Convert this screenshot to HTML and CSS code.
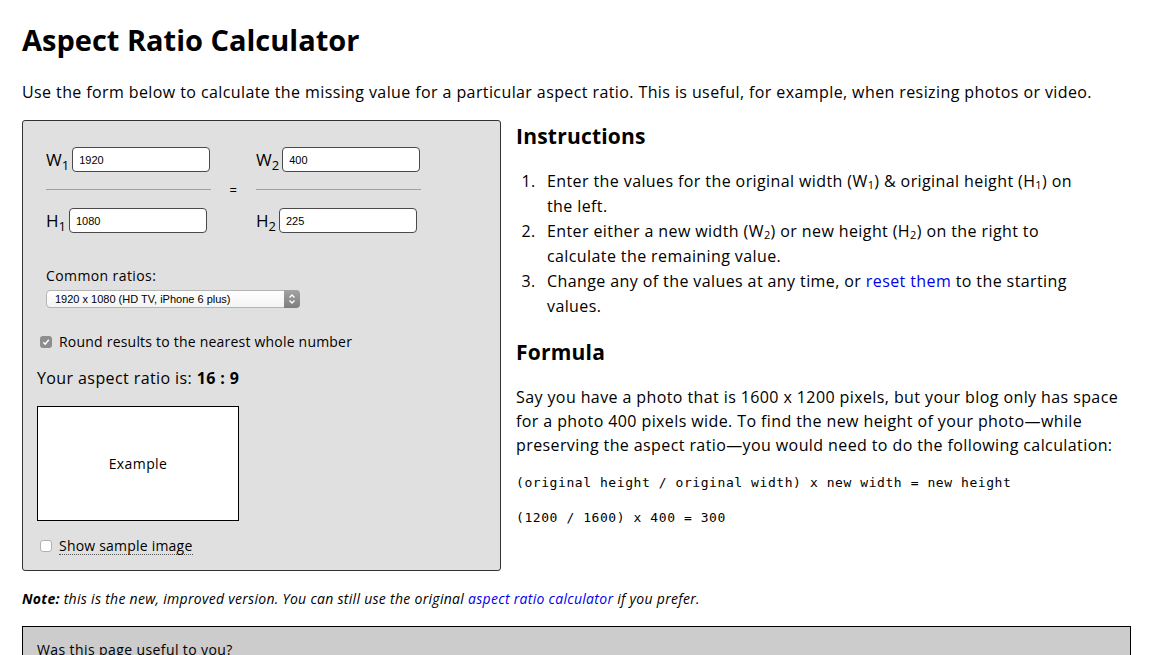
FILE: index.html
```html
<!DOCTYPE html>
<html lang="en">
<head>
<meta charset="utf-8">
<title>Aspect Ratio Calculator</title>
<link rel="stylesheet" href="styles.css">
</head>
<body>
<h1 class="title">Aspect Ratio Calculator</h1>
<p class="intro">Use the form below to calculate the missing value for a particular aspect ratio. This is useful, for example, when resizing photos or video.</p>

<div class="main">
  <div class="panel">
    <div class="ratio">
      <div class="frac">
        <div class="field"><label class="var">W<sub>1</sub></label><input class="num" type="text" value="1920"></div>
        <div class="bar"></div>
        <div class="field"><label class="var">H<sub>1</sub></label><input class="num" type="text" value="1080"></div>
      </div>
      <div class="eq">=</div>
      <div class="frac">
        <div class="field"><label class="var">W<sub>2</sub></label><input class="num" type="text" value="400"></div>
        <div class="bar"></div>
        <div class="field"><label class="var">H<sub>2</sub></label><input class="num" type="text" value="225"></div>
      </div>
    </div>

    <div class="common">
      <div class="common-label">Common ratios:</div>
      <div class="select">
        <span class="select-text">1920 x 1080 (HD TV, iPhone 6 plus)</span>
        <span class="select-arrow">
          <svg width="10" height="14" viewBox="0 0 10 14"><path d="M2.5 5.5 L5 3 L7.5 5.5" fill="none" stroke="#fff" stroke-width="1.4"/><path d="M2.5 8.5 L5 11 L7.5 8.5" fill="none" stroke="#fff" stroke-width="1.4"/></svg>
        </span>
      </div>
    </div>

    <div class="check-row round-row">
      <span class="cb cb-on"><svg width="12" height="12" viewBox="0 0 12 12"><path d="M3.3 6.2 L5.2 8.2 L8.8 3.8" fill="none" stroke="#fff" stroke-width="1.5"/></svg></span>
      <span class="check-text">Round results to the nearest whole number</span>
    </div>

    <div class="result">Your aspect ratio is: <b>16 : 9</b></div>

    <div class="example">Example</div>

    <div class="check-row show-row">
      <span class="cb cb-off"></span>
      <span class="check-text dotted">Show sample image</span>
    </div>
  </div>

  <div class="info">
    <h2 class="heading">Instructions</h2>
    <ol class="steps">
      <li>Enter the values for the original width (W<sub>1</sub>) &amp; original height (H<sub>1</sub>) on the left.</li>
      <li>Enter either a new width (W<sub>2</sub>) or new height (H<sub>2</sub>) on the right to calculate the remaining value.</li>
      <li>Change any of the values at any time, or <a class="link" href="#">reset them</a> to the starting values.</li>
    </ol>
    <h2 class="heading formula-heading">Formula</h2>
    <p class="formula-text">Say you have a photo that is 1600 x 1200 pixels, but your blog only has space for a photo 400 pixels wide. To find the new height of your photo—while preserving the aspect ratio—you would need to do the following calculation:</p>
    <p class="code code-first">(original height / original width) x new width = new height</p>
    <p class="code">(1200 / 1600) x 400 = 300</p>
  </div>
</div>

<p class="note"><b>Note:</b> this is the new, improved version. You can still use the original <a class="link" href="#">aspect ratio calculator</a> if you prefer.</p>

<div class="feedback">Was this page useful to you?</div>
</body>
</html>
```

FILE: styles.css
```css
html {
  overflow: hidden;
}

body {
  margin: 0;
  padding: 0 22px;
  font-family: "Open Sans", "DejaVu Sans", sans-serif;
  letter-spacing: 0.025em;
  color: #000;
  background: #fff;
}

.title {
  font-size: 29px;
  font-weight: bold;
  letter-spacing: 0;
  line-height: 40px;
  margin: 20px 0 0;
}

.intro {
  font-size: 16px;
  line-height: 24px;
  margin: 20px 0 16px;
}

.main {
  display: flex;
  align-items: flex-start;
  gap: 15px;
}

.panel {
  width: 479px;
  flex: none;
  box-sizing: border-box;
  background: #e0e0e0;
  border: 1px solid #333;
  border-radius: 3px;
  padding: 26px 14px 15px;
}

.ratio {
  display: flex;
  align-items: center;
  margin-left: 9px;
}

.frac {
  width: 165px;
  display: flex;
  flex-direction: column;
}

.field {
  display: flex;
  align-items: center;
  height: 25px;
}

.var {
  font-size: 17px;
  line-height: 25px;
  margin-right: 3px;
  letter-spacing: 0;
}

.var sub {
  font-size: 13px;
  line-height: 0;
  vertical-align: -4px;
}

.num {
  width: 138px;
  height: 25px;
  box-sizing: border-box;
  border: 1px solid #4a4a4a;
  border-radius: 4px;
  background: #fff;
  padding: 0 6px;
  margin: 0;
  font-family: "Liberation Sans", Arial, sans-serif;
  font-size: 11px;
  letter-spacing: 0;
  color: #000;
}

.bar {
  height: 1px;
  background: #a0a0a0;
  margin: 17px 0 18px;
}

.eq {
  width: 45px;
  text-align: center;
  font-size: 13px;
  line-height: 16px;
}

.common {
  margin: 34px 0 0 9px;
}

.common-label {
  font-size: 14px;
  line-height: 18px;
}

.select {
  position: relative;
  margin-top: 5px;
  width: 254px;
  height: 18px;
  box-sizing: border-box;
  border: 1px solid #b4b4b4;
  border-radius: 4px;
  background: linear-gradient(#ffffff, #f4f4f4);
  display: flex;
  align-items: center;
}

.select-text {
  font-family: "Liberation Sans", Arial, sans-serif;
  font-size: 11px;
  letter-spacing: 0;
  padding-left: 8px;
}

.select-arrow {
  position: absolute;
  right: -1px;
  top: -1px;
  width: 16px;
  height: 18px;
  border-radius: 0 4px 4px 0;
  background: linear-gradient(#a3a3a3, #7e7e7e);
  display: flex;
  align-items: center;
  justify-content: center;
}

.check-row {
  display: flex;
  align-items: center;
  height: 18px;
}

.round-row {
  margin-top: 25px;
}

.cb {
  width: 12px;
  height: 12px;
  box-sizing: border-box;
  border-radius: 3px;
  margin-left: 3px;
  margin-right: 7px;
  flex: none;
  display: flex;
}

.cb-on {
  background: #8d8d8d;
}

.cb-off {
  background: #fff;
  border: 1px solid #b0b0b0;
}

.check-text {
  font-size: 14px;
  line-height: 18px;
  letter-spacing: 0.015em;
}

.dotted {
  border-bottom: 1px dotted #555;
  line-height: 17px;
}

.result {
  margin-top: 15px;
  font-size: 16px;
  line-height: 24px;
}

.example {
  margin-top: 16px;
  width: 202px;
  height: 115px;
  box-sizing: border-box;
  border: 1px solid #000;
  background: #fff;
  display: flex;
  align-items: center;
  justify-content: center;
  font-size: 14px;
}

.show-row {
  margin-top: 16px;
}

.info {
  flex: 1;
}

.heading {
  font-size: 21px;
  font-weight: bold;
  letter-spacing: 0.01em;
  line-height: 30px;
  margin: 1px 0 0;
}

.steps {
  margin: 18px 0 0;
  padding: 0 36px 0 31px;
  font-size: 16px;
  line-height: 25px;
}

.steps li::marker {
  content: counter(list-item) ".\2002\2009";
}

.steps sub,
.formula-text sub {
  font-size: 11px;
  line-height: 0;
  vertical-align: -2px;
}

.link {
  color: #0000ee;
  text-decoration: none;
}

.formula-heading {
  margin-top: 18px;
}

.formula-text {
  margin: 18px 0 0;
  font-size: 16px;
  line-height: 24px;
}

.code {
  margin: 15px 0 0;
  font-family: "DejaVu Sans Mono", monospace;
  font-size: 13px;
  letter-spacing: 0.57px;
  line-height: 20px;
}

.code-first {
  margin-top: 16px;
}

.note {
  margin: 18px 0 0;
  font-size: 14px;
  line-height: 20px;
  font-style: italic;
  letter-spacing: 0.021em;
}

.feedback {
  margin-top: 17px;
  background: #cccccc;
  border: 1px solid #000;
  border-bottom: none;
  padding: 13px 14px 20px;
  font-size: 14px;
  line-height: 20px;
}
```
